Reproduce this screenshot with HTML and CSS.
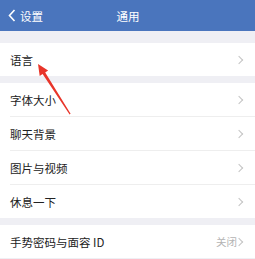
FILE: index.html
```html
<!DOCTYPE html>
<html lang="zh">
<head>
<meta charset="utf-8">
<link rel="stylesheet" href="styles.css">
</head>
<body>
<div class="page">
  <header class="nav">
    <div class="back">
      <svg class="back-icon" width="8" height="13" viewBox="0 0 8 13"><path d="M6.5 1 L1.5 6.5 L6.5 12" fill="none" stroke="#fff" stroke-width="1.6"/></svg>
      <span>设置</span>
    </div>
    <div class="title">通用</div>
  </header>
  <div class="gap gap-top"></div>
  <div class="group">
    <div class="row"><span class="label">语言</span><span class="chev"></span></div>
  </div>
  <div class="gap"></div>
  <div class="group">
    <div class="row"><span class="label">字体大小</span><span class="chev"></span></div>
    <div class="row"><span class="label">聊天背景</span><span class="chev"></span></div>
    <div class="row"><span class="label">图片与视频</span><span class="chev"></span></div>
    <div class="row"><span class="label">休息一下</span><span class="chev"></span></div>
  </div>
  <div class="gap"></div>
  <div class="group">
    <div class="row"><span class="label">手势密码与面容 ID</span><span class="value">关闭</span><span class="chev chev-tight"></span></div>
  </div>
  <svg class="arrow" width="255" height="259" viewBox="0 0 255 259">
    <polygon points="38,64 48.1,70.6 45.2,72.5 70.6,113.8 69.6,114.4 42.6,74.1 39.7,76" fill="#e8352a"/>
  </svg>
</div>
</body>
</html>
```

FILE: styles.css
```css
html, body {
  margin: 0;
  padding: 0;
}
body {
  background: #efeff4;
  font-family: "Noto Sans CJK SC", "Liberation Sans", sans-serif;
  width: 255px;
  height: 259px;
  overflow: hidden;
}
.page {
  position: relative;
  width: 255px;
  height: 259px;
}
.nav {
  height: 31px;
  background: #4a75bd;
  color: #fff;
  display: flex;
  align-items: center;
  justify-content: center;
  position: relative;
}
.back {
  position: absolute;
  left: 8px;
  top: 0;
  height: 31px;
  display: flex;
  align-items: center;
  gap: 4px;
  font-size: 11.5px;
}
.back-icon {
  display: block;
}
.title {
  font-size: 11.5px;
  padding-left: 1px;
}
.gap {
  height: 7px;
}
.gap-top {
  height: 12px;
}
.group {
  background: #fff;
  padding-left: 10px;
}
.row {
  height: 33px;
  display: flex;
  align-items: center;
  padding-right: 12px;
  border-bottom: 1px solid #eeeeee;
  font-size: 11.5px;
  color: #222;
}
.row:last-child {
  border-bottom: none;
}
.label {
  flex: 1;
}
.value {
  color: #b4b4b4;
  font-size: 10.5px;
}
.chev {
  width: 5px;
  height: 5px;
  border-top: 1.2px solid #c4c4c4;
  border-right: 1.2px solid #c4c4c4;
  transform: rotate(45deg);
  margin-right: 1px;
}
.chev-tight {
  margin-left: -1px;
}
.arrow {
  position: absolute;
  left: 0;
  top: 0;
  pointer-events: none;
}
```
